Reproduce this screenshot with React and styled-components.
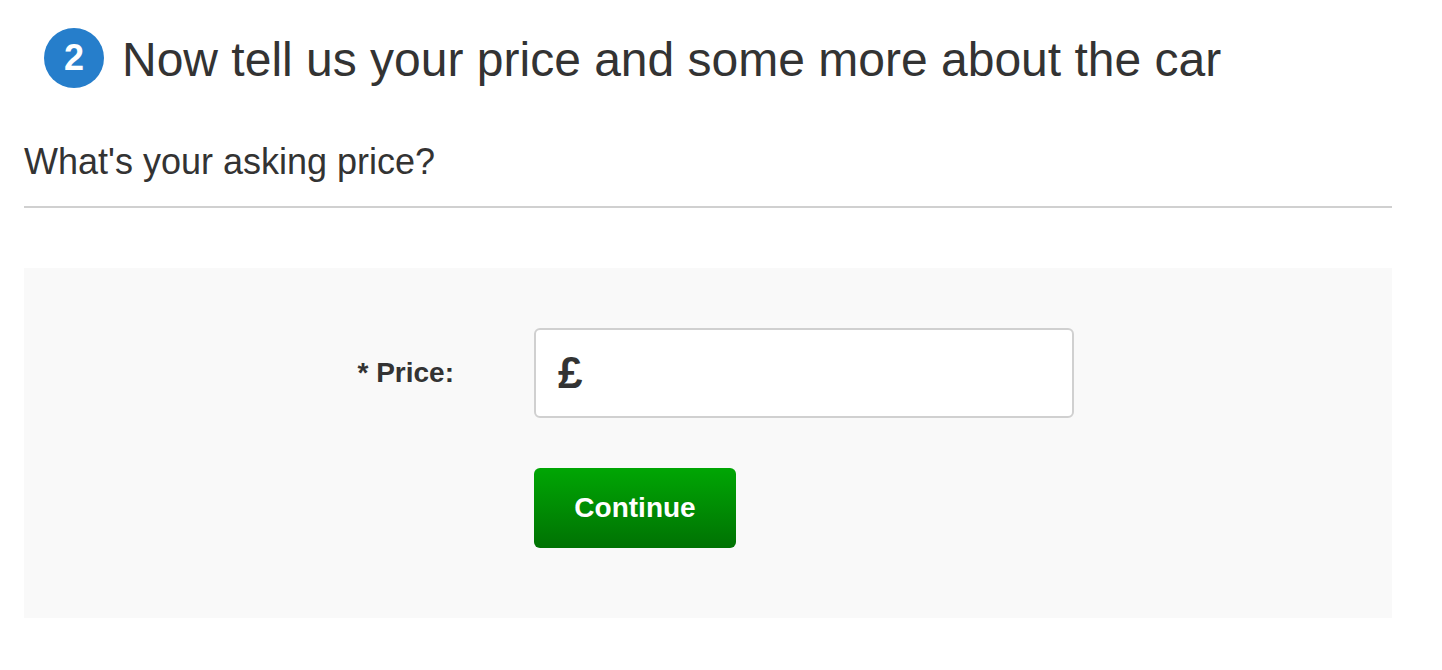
import React, { useState } from 'react';
import styled, { createGlobalStyle } from 'styled-components';

const GlobalStyle = createGlobalStyle`
	* {
		box-sizing: border-box;
	}

	body {
		margin: 0;
		background-color: #fff;
		color: #333;
		font-family: 'Liberation Sans', Arial, sans-serif;
	}
`;

const Page = styled.main`
	padding: 28px 50px 52px 24px;
`;

const StepHeader = styled.header`
	display: flex;
	align-items: flex-start;
	gap: 18px;
	padding-left: 20px;
`;

const StepNumber = styled.span`
	display: flex;
	flex: none;
	align-items: center;
	justify-content: center;
	width: 60px;
	height: 60px;
	border-radius: 50%;
	background-color: #267ecb;
	color: #fff;
	font-size: 36px;
	font-weight: bold;
	line-height: 60px;
`;

const StepTitle = styled.h1`
	margin: 0;
	font-size: 48px;
	font-weight: normal;
	line-height: 64px;
`;

const Question = styled.h2`
	margin: 44px 0 60px;
	padding-bottom: 18px;
	border-bottom: 2px solid #d0d0d0;
	font-size: 36px;
	font-weight: normal;
	line-height: 52px;
`;

const PriceForm = styled.form`
	display: grid;
	grid-template-columns: 430px minmax(0, 540px);
	column-gap: 80px;
	row-gap: 50px;
	padding: 60px 0 70px;
	background-color: #f9f9f9;
`;

const Label = styled.label`
	align-self: center;
	font-size: 28px;
	font-weight: bold;
	text-align: right;
`;

const PriceBox = styled.div`
	display: flex;
	align-items: center;
	height: 90px;
	padding: 0 22px;
	border: 2px solid #d0d0d0;
	border-radius: 6px;
	background-color: #fff;
	font-size: 44px;
	font-weight: bold;
`;

const PriceInput = styled.input`
	flex: 1;
	min-width: 0;
	height: 100%;
	padding: 0 0 0 16px;
	border: 0;
	outline: 0;
	background: transparent;
	color: inherit;
	font: inherit;
`;

const ContinueButton = styled.button`
	grid-column: 2;
	justify-self: start;
	min-width: 202px;
	height: 80px;
	padding: 0 40px;
	border: 0;
	border-radius: 6px;
	background: linear-gradient(#00a604, #007203);
	color: #fff;
	font-family: inherit;
	font-size: 28px;
	font-weight: bold;
	cursor: pointer;
`;

const App = () => {
	const [price, setPrice] = useState('');

	return (
		<Page>
			<GlobalStyle />
			<StepHeader>
				<StepNumber>2</StepNumber>
				<StepTitle>Now tell us your price and some more about the car</StepTitle>
			</StepHeader>
			<Question>What's your asking price?</Question>
			<PriceForm onSubmit={e => e.preventDefault()}>
				<Label htmlFor='price'>* Price:</Label>
				<PriceBox>
					<span>£</span>
					<PriceInput
						id='price'
						type='text'
						inputMode='decimal'
						required
						value={price}
						onChange={e => setPrice(e.target.value)}
					/>
				</PriceBox>
				<ContinueButton type='submit'>Continue</ContinueButton>
			</PriceForm>
		</Page>
	);
};

export default App;
